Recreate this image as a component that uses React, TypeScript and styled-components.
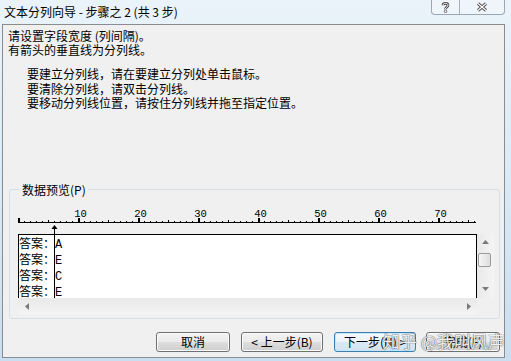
import styled, { createGlobalStyle } from 'styled-components';

const GlobalStyle = createGlobalStyle`
  html, body { margin: 0; padding: 0; }
  body {
    width: 511px;
    height: 361px;
    overflow: hidden;
    font-family: "Noto Sans CJK SC", "Liberation Sans", sans-serif;
    color: #000;
  }
`;

const Window = styled.div`
  position: relative;
  box-sizing: border-box;
  width: 511px;
  height: 361px;
  padding: 0 6px 3px 2px;
  display: flex;
  flex-direction: column;
  overflow: hidden;
  background: linear-gradient(180deg, #eaf3fa 0%, #dcebf6 45%, #c9def0 100%);
`;

const TitleBar = styled.div`
  height: 24px;
  display: flex;
  align-items: flex-start;
  flex-shrink: 0;
`;

const Title = styled.div`
  padding-left: 2px;
  font-size: 12px;
  line-height: 24px;
  white-space: nowrap;
`;

const CaptionGroup = styled.div`
  margin-left: auto;
  height: 14px;
  display: flex;
  border: 1px solid rgba(70, 90, 110, 0.5);
  border-top: none;
  border-radius: 0 0 4px 4px;
  background: rgba(255, 255, 255, 0.3);
`;

const CaptionButton = styled.div<{ $w: number; $sep?: boolean }>`
  width: ${(p) => p.$w}px;
  display: flex;
  align-items: center;
  justify-content: center;
  border-left: ${(p) => (p.$sep ? '1px solid rgba(70, 90, 110, 0.45)' : 'none')};
`;

const Client = styled.div`
  flex: 1;
  display: flex;
  flex-direction: column;
  border: 1px solid #8a8d90;
  background: #f0f0f0;
  font-size: 12px;
`;

const Intro = styled.div`
  margin-top: 4px;
  padding-left: 5px;
  line-height: 14px;
`;

const Hints = styled.div`
  margin-top: 10px;
  padding-left: 24px;
  line-height: 14.5px;
`;

const Group = styled.fieldset`
  margin: 72px 4px 0 6px;
  padding: 0 0 3px 8px;
  min-width: 0;
  border: 1px solid #d5dfe5;
  border-radius: 3px;
`;

const GroupLabel = styled.legend`
  margin-left: 2px;
  padding: 0 2px;
  font-size: 12px;
  line-height: 14px;
`;

const Preview = styled.div`
  position: relative;
  margin-top: 8px;
`;

const Ruler = styled.svg`
  display: block;
  width: 460px;
  height: 22px;
`;

const SplitArrow = styled.svg`
  position: absolute;
  left: 33px;
  top: 20px;
  width: 7px;
  height: 73px;
`;

const DataControl = styled.div`
  margin-top: 7px;
  display: grid;
  grid-template-columns: 459px 17px;
  grid-template-rows: 64px 17px;
  width: 476px;
`;

const DataBox = styled.div`
  box-sizing: border-box;
  border: 1px solid #000;
  border-bottom: none;
  background: #fff;
  overflow: hidden;
`;

const DataRow = styled.div`
  height: 16px;
  line-height: 16px;
  font-size: 12px;
  white-space: nowrap;
`;

const Letter = styled.span`
  font-family: "Liberation Mono", monospace;
  font-size: 12px;
`;

const ScrollTrack = styled.div<{ $horizontal?: boolean }>`
  display: flex;
  flex-direction: ${(p) => (p.$horizontal ? 'row' : 'column')};
  background: linear-gradient(${(p) => (p.$horizontal ? '180deg' : '90deg')}, #e9e9e9, #f4f4f4);
`;

const ScrollArrow = styled.div`
  width: 17px;
  height: 17px;
  flex-shrink: 0;
  display: flex;
  align-items: center;
  justify-content: center;
`;

const Thumb = styled.div`
  box-sizing: border-box;
  margin: 2px 3px 0 1px;
  height: 14px;
  border: 1px solid #9a9a9a;
  border-radius: 2px;
  background: linear-gradient(90deg, #f6f6f6, #dedede);
`;

const Spacer = styled.div`
  flex: 1;
`;

const Corner = styled.div`
  background: #f0f0f0;
`;

const ButtonRow = styled.div`
  margin-top: 13px;
  padding-right: 4px;
  display: flex;
  justify-content: flex-end;
  gap: 10px;
`;

const Button = styled.div<{ $w: number; $default?: boolean; $gap?: number }>`
  box-sizing: border-box;
  width: ${(p) => p.$w}px;
  height: 20px;
  margin-right: ${(p) => p.$gap ?? 0}px;
  display: flex;
  align-items: center;
  justify-content: center;
  font-size: 12px;
  white-space: nowrap;
  border-radius: 3px;
  border: 1px solid ${(p) => (p.$default ? '#3c7fb1' : '#707070')};
  background: ${(p) =>
    p.$default
      ? 'linear-gradient(180deg, #f4f9fd 0%, #eaf3fa 50%, #dbe9f5 50%, #d0e3f2 100%)'
      : 'linear-gradient(180deg, #f2f2f2 0%, #ebebeb 50%, #dddddd 50%, #cfcfcf 100%)'};
  box-shadow: inset 0 0 0 1px ${(p) => (p.$default ? '#c6e6fa' : '#fbfbfb')};
`;

const Watermark = styled.div`
  position: absolute;
  left: 383px;
  top: 331px;
  font-size: 17px;
  line-height: 20px;
  white-space: nowrap;
  color: rgba(255, 255, 255, 0.92);
  text-shadow: 0 0 1px rgba(60, 60, 60, 0.8), 0 0 1px rgba(60, 60, 60, 0.8);
  pointer-events: none;
`;

const rows = ['A', 'E', 'C', 'E'];

const RulerDrawing = () => {
  const marks = [];
  for (let i = 0; i <= 76; i++) {
    const x = i * 6;
    if (i % 10 === 0) marks.push(<rect key={i} x={x} y={13} width={2} height={4} fill="#000" />);
    else if (i % 5 === 0) marks.push(<rect key={i} x={x} y={15} width={1} height={2} fill="#000" />);
    else marks.push(<rect key={i} x={x} y={16} width={1} height={1} fill="#000" />);
  }
  const labels = [10, 20, 30, 40, 50, 60, 70];
  return (
    <Ruler viewBox="0 0 460 22">
      {marks}
      <rect x={0} y={17} width={458} height={1} fill="#000" />
      {labels.map((n) => (
        <text
          key={n}
          x={n * 6 + 2.5}
          y={12}
          textAnchor="middle"
          fontFamily="Liberation Mono, monospace"
          fontSize="10.5"
          fill="#000"
        >
          {n}
        </text>
      ))}
    </Ruler>
  );
};

const Tri = ({ dir }: { dir: 'up' | 'down' | 'left' | 'right' }) => {
  const pts = {
    up: '0,4 7,4 3.5,0',
    down: '0,0 7,0 3.5,4',
    left: '4,0 4,7 0,3.5',
    right: '0,0 0,7 4,3.5',
  }[dir];
  const vertical = dir === 'up' || dir === 'down';
  return (
    <svg width={vertical ? 7 : 4} height={vertical ? 4 : 7}>
      <polygon points={pts} fill="#7a7a7a" />
    </svg>
  );
};

export default function App() {
  return (
    <>
      <GlobalStyle />
      <Window>
        <TitleBar>
          <Title>文本分列向导 - 步骤之 2 (共 3 步)</Title>
          <CaptionGroup>
            <CaptionButton $w={27}>
              <svg width="9" height="11" viewBox="0 0 9 11">
                <path d="M2 3.2 C2 0.8 7 0.8 7 3.2 C7 5 4.5 5 4.5 7.2" stroke="#4a4a4a" strokeWidth="2.6" fill="none" />
                <path d="M2 3.2 C2 0.8 7 0.8 7 3.2 C7 5 4.5 5 4.5 7.2" stroke="#fff" strokeWidth="1" fill="none" />
                <circle cx="4.5" cy="9.3" r="1.3" fill="#fff" stroke="#4a4a4a" strokeWidth="0.8" />
              </svg>
            </CaptionButton>
            <CaptionButton $w={44} $sep>
              <svg width="12" height="10" viewBox="0 0 12 10">
                <path d="M2 1.5 L10 8.5 M10 1.5 L2 8.5" stroke="#4a4a4a" strokeWidth="3" />
                <path d="M2 1.5 L10 8.5 M10 1.5 L2 8.5" stroke="#fff" strokeWidth="1.2" />
              </svg>
            </CaptionButton>
          </CaptionGroup>
        </TitleBar>
        <Client>
          <Intro>
            <div>请设置字段宽度 (列间隔)。</div>
            <div>有箭头的垂直线为分列线。</div>
          </Intro>
          <Hints>
            <div>要建立分列线，请在要建立分列处单击鼠标。</div>
            <div>要清除分列线，请双击分列线。</div>
            <div>要移动分列线位置，请按住分列线并拖至指定位置。</div>
          </Hints>
          <Group>
            <GroupLabel>数据预览(P)</GroupLabel>
            <Preview>
              <RulerDrawing />
              <DataControl>
                <DataBox>
                  {rows.map((r, i) => (
                    <DataRow key={i}>
                      答案：<Letter>{r}</Letter>
                    </DataRow>
                  ))}
                </DataBox>
                <ScrollTrack>
                  <ScrollArrow>
                    <Tri dir="up" />
                  </ScrollArrow>
                  <Thumb />
                  <Spacer />
                  <ScrollArrow>
                    <Tri dir="down" />
                  </ScrollArrow>
                </ScrollTrack>
                <ScrollTrack $horizontal>
                  <ScrollArrow>
                    <Tri dir="left" />
                  </ScrollArrow>
                  <Spacer />
                  <ScrollArrow>
                    <Tri dir="right" />
                  </ScrollArrow>
                </ScrollTrack>
                <Corner />
              </DataControl>
              <SplitArrow viewBox="0 0 7 73">
                <polygon points="3.5,0 0.5,4 6.5,4" fill="#000" />
                <rect x={3} y={3} width={1} height={70} fill="#000" />
              </SplitArrow>
            </Preview>
          </Group>
          <ButtonRow>
            <Button $w={74} $gap={1}>取消</Button>
            <Button $w={82} $gap={1}>&lt; 上一步(B)</Button>
            <Button $w={82} $default>下一步(N) &gt;</Button>
            <Button $w={74}>完成(F)</Button>
          </ButtonRow>
        </Client>
        <Watermark>知乎 @我叫风声</Watermark>
      </Window>
    </>
  );
}
